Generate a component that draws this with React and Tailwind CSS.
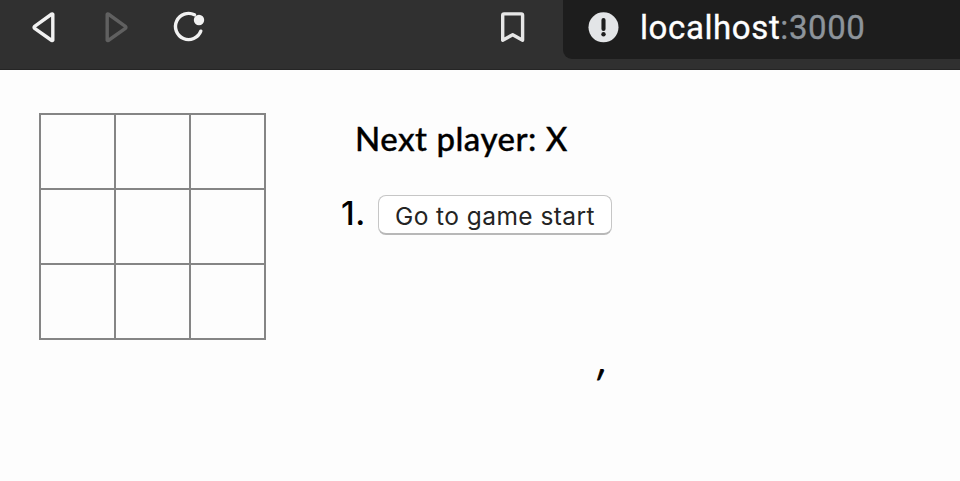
import React from "react";

function BrowserBar() {
  return (
    <header className="flex h-[70px] items-start border-b border-[#252525] bg-[#303030]">
      <svg className="h-[69px] w-[563px] shrink-0" viewBox="0 0 563 69" fill="none" strokeLinecap="round" strokeLinejoin="round">
        <path d="M52.8 14.2V40.3Q52.4 40.8 51.8 40.5L34.6 28.3Q33.7 27.3 34.6 26.3L51.8 14Q52.4 13.7 52.8 14.2Z" stroke="#f1f1f1" strokeWidth="3.4" />
        <path d="M107.2 14.2V40.3Q107.6 40.8 108.2 40.5L125.4 28.3Q126.3 27.3 125.4 26.3L108.2 14Q107.6 13.7 107.2 14.2Z" stroke="#606060" strokeWidth="3.4" />
        <path d="M194.5 14.8A13.1 13.1 0 1 0 200.8 31.2" stroke="#f1f1f1" strokeWidth="3.4" />
        <circle cx="199" cy="20" r="5.2" fill="#f1f1f1" />
        <path d="M502.7 40.2V15.2Q502.7 13.9 504 13.9H521.3Q522.6 13.9 522.6 15.2V40.2L512.7 34.7Z" stroke="#e6e6e6" strokeWidth="3.4" />
      </svg>
      <div className="flex h-[59px] flex-1 items-start rounded-bl-[9px] bg-[#1d1d1d] pl-[25px]">
        <svg className="mt-3 h-[31px] w-[31px] shrink-0" viewBox="0 0 31 31">
          <circle cx="15.5" cy="15.3" r="15" fill="#e3e5e7" />
          <path d="M15.5 8V17" stroke="#1d1d1d" strokeWidth="4.1" strokeLinecap="round" />
          <circle cx="15.5" cy="22.2" r="2.2" fill="#1d1d1d" />
        </svg>
        <span className="ml-[21px] mt-[8px] whitespace-nowrap font-['Roboto',sans-serif] text-[33px] leading-[40px] tracking-[0.6px] text-white [-webkit-text-stroke:0.35px]">
          localhost<span className="text-[#8d949b]">:3000</span>
        </span>
      </div>
    </header>
  );
}

function Board() {
  return (
    <div className="grid h-[227px] w-[227px] grid-cols-[repeat(3,75px)] grid-rows-[repeat(3,75px)] border-l-2 border-t-2 border-[#858585]">
      {Array.from({ length: 9 }, (_, i) => (
        <div key={i} className="border-b-2 border-r-2 border-[#858585]" />
      ))}
    </div>
  );
}

export default function App() {
  return (
    <div className="h-[481px] w-[960px] overflow-hidden bg-[#fdfdfd] text-black">
      <BrowserBar />
      <main className="flex pl-[38.5px] pt-[43px]">
        <Board />
        <section className="ml-[75.5px] font-['Lato',sans-serif] font-medium">
          <p className="ml-[14px] mt-[5px] whitespace-nowrap text-[33px] leading-[40px] tracking-[0.5px] [-webkit-text-stroke:0.35px]">Next player: X</p>
          <div className="mt-[34px] flex items-start">
            <span className="mt-px w-[37px] font-['Inter',sans-serif] text-[33px] leading-[40px] tracking-[0.5px]">1.</span>
            <button className="mt-[3px] h-[40px] w-[234px] whitespace-nowrap rounded-[8px] border border-[#c6c6c6] border-b-2 border-b-[#b8b8b8] bg-white pt-px font-['Inter',sans-serif] text-[24.5px] font-normal leading-[38px] tracking-[0.44px] text-[#242424]">
              Go to game start
            </button>
          </div>
          <p className="ml-[252px] mt-[128px] text-[33px] italic leading-[40px] [-webkit-text-stroke:0.8px]">′</p>
        </section>
      </main>
    </div>
  );
}
